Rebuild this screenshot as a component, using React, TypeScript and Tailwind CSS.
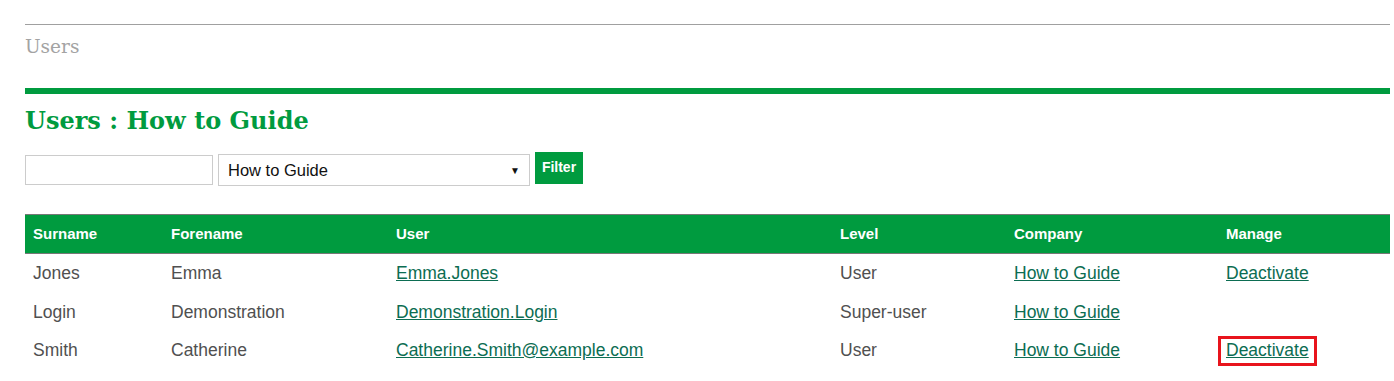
import React from "react";

const rows = [
  { s: "Jones", f: "Emma", u: "Emma.Jones", l: "User", c: "How to Guide", m: "Deactivate", mark: false },
  { s: "Login", f: "Demonstration", u: "Demonstration.Login", l: "Super-user", c: "How to Guide", m: "", mark: false },
  { s: "Smith", f: "Catherine", u: "Catherine.Smith@example.com", l: "User", c: "How to Guide", m: "Deactivate", mark: true },
];

const cols = ["w-[138px]", "w-[225px]", "w-[444px]", "w-[174px]", "w-[212px]", "w-[172px]"];

export default function App() {
  const sans = { fontFamily: '"Liberation Sans", Arial, sans-serif' };
  const serif = { fontFamily: '"DejaVu Serif", serif' };
  return (
    <div className="bg-white w-[1394px] h-[381px] overflow-hidden" style={sans}>
      <div className="ml-[25px] w-[1365px] pt-[24px]">
        <div className="h-px bg-[#a0a0a0]" />
        <div className="h-[42px] flex items-center text-[18.5px] text-[#a3a3a3] pt-[1px]" style={serif}>
          Users
        </div>
        <div className="h-[21px]" />
        <div className="h-[6px] bg-[#009b3f]" />
        <div className="h-[52px] flex items-center pt-[1px] text-[24px] font-bold text-[#009b3f]" style={serif}>
          Users : How to Guide
        </div>
        <div className="mt-[6px] flex items-start h-[34px]">
          <input className="mt-[3px] w-[188px] h-[30px] border border-[#cccccc] bg-white outline-none" />
          <div className="mt-[2px] ml-[5px] w-[312px] h-[32px] border border-[#cccccc] flex items-center justify-between pl-[9px] pr-[9px] text-[16.5px] text-[#111]">
            <span>How to Guide</span>
            <span className="text-[10px]">▼</span>
          </div>
          <button className="ml-[5px] w-[48px] h-[32px] bg-[#009b3f] text-white text-[14px] font-bold flex items-center justify-center pb-[2px]">
            Filter
          </button>
        </div>
        <div className="h-[28px]" />
        <div className="flex h-[40px] bg-[#009b3f] border-y border-[#777777] text-white text-[15px] font-bold items-center">
          {["Surname", "Forename", "User", "Level", "Company", "Manage"].map((h, i) => (
            <div key={h} className={`${cols[i]} pl-[8px]`}>{h}</div>
          ))}
        </div>
        {rows.map((r, idx) => (
          <div key={idx} className="flex h-[38.5px] items-center text-[17.5px] text-[#505050]">
            <div className={`${cols[0]} pl-[8px]`}>{r.s}</div>
            <div className={`${cols[1]} pl-[8px]`}>{r.f}</div>
            <div className={`${cols[2]} pl-[8px]`}>
              <a className="underline text-[#0c6d52]">{r.u}</a>
            </div>
            <div className={`${cols[3]} pl-[8px]`}>{r.l}</div>
            <div className={`${cols[4]} pl-[8px]`}>
              <a className="underline text-[#0c6d52]">{r.c}</a>
            </div>
            <div className={`${cols[5]} pl-[8px]`}>
              {r.m && (
                <a className="relative underline text-[#0c6d52]">
                  {r.m}
                  {r.mark && (
                    <span className="absolute left-[-8px] right-[-8px] top-[-4px] bottom-[-6px] border-[3px] border-[#e8141c]" />
                  )}
                </a>
              )}
            </div>
          </div>
        ))}
      </div>
    </div>
  );
}
